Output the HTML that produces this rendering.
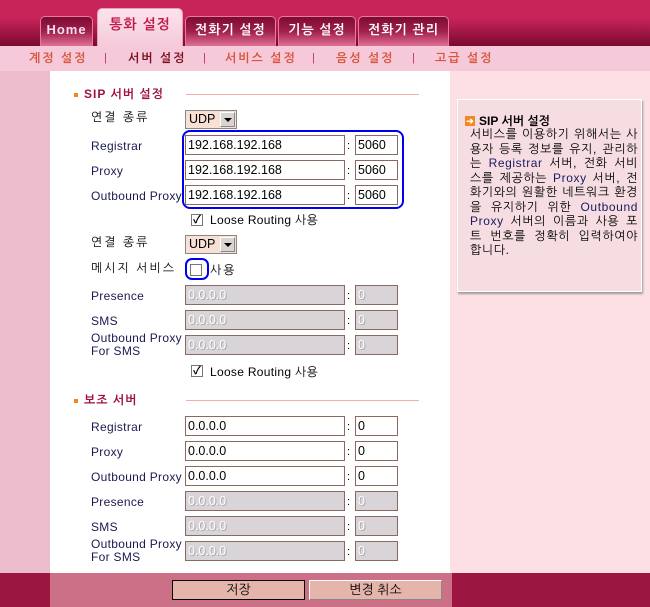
<!DOCTYPE html>
<html><head><meta charset="utf-8"><style>
*{margin:0;padding:0;box-sizing:border-box}
body{width:650px;height:607px;position:relative;overflow:hidden;font-family:"Liberation Sans","NanumGothic","Noto Sans CJK KR",sans-serif;font-size:12px;color:#000;background:#fff}
.a{position:absolute}
#top{left:0;top:0;width:650px;height:46px;background:linear-gradient(#c8245a 0,#c8245a 18px,#7a0a30 46px)}
.tab{position:absolute;top:16px;height:30px;border:1px solid #e87aa0;border-bottom:none;border-radius:5px 5px 0 0;background:linear-gradient(#7c0a32,#a0204c 50%,#e07096);color:#fff;font-weight:bold;font-size:13px;text-align:center;line-height:26px;letter-spacing:1px}
#sub{left:0;top:46px;width:650px;height:25px;background:#f5c9d9}
.sn{position:absolute;top:51px;font-size:12px;font-weight:bold;color:#d8563c;letter-spacing:2px}
.sep{position:absolute;top:52px;color:#c0305a;font-size:11px}
#left{left:0;top:71px;width:50px;height:502px;background:#ecbccc}
#right{left:450px;top:71px;width:200px;height:502px;background:#fde0e4}
.lab{position:absolute;left:91px;font-size:12px;color:#1a1a50;letter-spacing:0.3px}
.lab2{position:absolute;left:91px;font-size:12px;color:#000;letter-spacing:2px}
.ip{position:absolute;left:185px;width:160px;height:20px;border:1px solid #8a6a60;background:#fff;font-size:12.5px;padding:1px 2px;line-height:16px}
.pt{position:absolute;left:355px;width:43px;height:20px;border:1px solid #8a6a60;background:#fff;font-size:12.5px;padding:1px 2px;line-height:16px}
.dis{background:#d8d4d8;color:#fff;text-shadow:1px 1px 0 #aaa}
.col{position:absolute;left:347px;font-size:11px;color:#000}
.sel{position:absolute;left:185px;width:52px;height:19px;border:1px solid #888;background:#f8e0d4;font-size:12.5px;padding-left:3px;line-height:17px}
.sel i{position:absolute;right:1px;top:1px;width:15px;height:15px;background:#d8d4d0;border:1px solid #fff;border-right-color:#888;border-bottom-color:#888}
.sel i:after{content:"";position:absolute;left:3px;top:5px;border:4px solid transparent;border-top:4px solid #000}
.cb{position:absolute;width:12px;height:12px;border:1px solid #777;background:#fff;font-size:11px;line-height:10px;text-align:center;font-weight:bold}
.h{position:absolute;left:74px;font-size:12px;font-weight:bold;color:#a01040;letter-spacing:1px}
.h:before{content:"";display:inline-block;width:4px;height:4px;background:#f08a20;margin-right:6px;vertical-align:middle}
.line{position:absolute;left:186px;width:233px;height:1px;background:#f0b0a8}
</style></head><body>
<div id="top" class="a"></div>
<div class="tab" style="left:40px;width:53px;color:#f0e0f0">Home</div>
<div class="tab" style="left:97px;top:8px;width:86px;height:39px;background:linear-gradient(#fbe3ec,#f5c9d9);border-color:#e8a0b8;color:#c0184a;font-size:14px;line-height:30px">통화 설정</div>
<div class="tab" style="left:185px;width:91px;">전화기 설정</div>
<div class="tab" style="left:278px;width:78px;">기능 설정</div>
<div class="tab" style="left:358px;width:91px;">전화기 관리</div>
<div id="sub" class="a"></div>
<div class="sn" style="left:29px">계정 설정</div><div class="sep" style="left:104px">|</div>
<div class="sn" style="left:128px;color:#7a1020">서버 설정</div><div class="sep" style="left:203px">|</div>
<div class="sn" style="left:225px">서비스 설정</div><div class="sep" style="left:312px">|</div>
<div class="sn" style="left:336px">음성 설정</div><div class="sep" style="left:412px">|</div>
<div class="sn" style="left:435px">고급 설정</div>
<div id="left" class="a"></div>
<div id="right" class="a"></div>

<div class="h" style="top:87px">SIP 서버 설정</div><div class="line" style="top:94px"></div>
<div class="lab2" style="top:110px">연결 종류</div><div class="sel" style="top:110px">UDP<i></i></div>
<div class="a" style="left:182px;top:130px;width:222px;height:79px;border:2px solid #0000f0;border-radius:8px"></div>
<div class="lab" style="top:139px">Registrar</div><div class="ip" style="top:135px">192.168.192.168</div><div class="col" style="top:140px">:</div><div class="pt" style="top:135px">5060</div>
<div class="lab" style="top:164px">Proxy</div><div class="ip" style="top:160px">192.168.192.168</div><div class="col" style="top:165px">:</div><div class="pt" style="top:160px">5060</div>
<div class="lab" style="top:189px">Outbound Proxy</div><div class="ip" style="top:185px">192.168.192.168</div><div class="col" style="top:190px">:</div><div class="pt" style="top:185px">5060</div>
<div class="cb" style="left:191px;top:214px">✓</div><div class="lab" style="left:210px;top:213px;color:#000">Loose Routing 사용</div>
<div class="lab2" style="top:235px">연결 종류</div><div class="sel" style="top:235px">UDP<i></i></div>
<div class="lab2" style="top:261px">메시지 서비스</div>
<div class="a" style="left:185px;top:258px;width:24px;height:22px;border:2px solid #0000f0;border-radius:7px"></div>
<div class="cb" style="left:190px;top:264px"></div><div class="lab2" style="left:210px;top:263px">사용</div>
<div class="lab" style="top:289px">Presence</div><div class="ip dis" style="top:285px">0.0.0.0</div><div class="col" style="top:290px">:</div><div class="pt dis" style="top:285px">0</div>
<div class="lab" style="top:314px">SMS</div><div class="ip dis" style="top:310px">0.0.0.0</div><div class="col" style="top:315px">:</div><div class="pt dis" style="top:310px">0</div>
<div class="lab" style="top:332px;line-height:13px">Outbound Proxy<br>For SMS</div><div class="ip dis" style="top:335px">0.0.0.0</div><div class="col" style="top:340px">:</div><div class="pt dis" style="top:335px">0</div>
<div class="cb" style="left:191px;top:365px">✓</div><div class="lab" style="left:210px;top:365px;color:#000">Loose Routing 사용</div>

<div class="h" style="top:393px">보조 서버</div><div class="line" style="top:400px"></div>
<div class="lab" style="top:420px">Registrar</div><div class="ip" style="top:416px">0.0.0.0</div><div class="col" style="top:421px">:</div><div class="pt" style="top:416px">0</div>
<div class="lab" style="top:445px">Proxy</div><div class="ip" style="top:441px">0.0.0.0</div><div class="col" style="top:446px">:</div><div class="pt" style="top:441px">0</div>
<div class="lab" style="top:470px">Outbound Proxy</div><div class="ip" style="top:466px">0.0.0.0</div><div class="col" style="top:471px">:</div><div class="pt" style="top:466px">0</div>
<div class="lab" style="top:495px">Presence</div><div class="ip dis" style="top:491px">0.0.0.0</div><div class="col" style="top:496px">:</div><div class="pt dis" style="top:491px">0</div>
<div class="lab" style="top:520px">SMS</div><div class="ip dis" style="top:516px">0.0.0.0</div><div class="col" style="top:521px">:</div><div class="pt dis" style="top:516px">0</div>
<div class="lab" style="top:538px;line-height:13px">Outbound Proxy<br>For SMS</div><div class="ip dis" style="top:541px">0.0.0.0</div><div class="col" style="top:546px">:</div><div class="pt dis" style="top:541px">0</div>

<div class="a" style="left:457px;top:99px;width:185px;height:193px;background:#f5dde2;border:1px solid #fff;box-shadow:1px 2px 2px #999"></div>
<div class="a" style="left:465px;top:116px;width:10px;height:10px;background:#f08a20;color:#fff;font-size:9px;line-height:10px;text-align:center;font-weight:bold">➔</div>
<div class="a" style="left:479px;top:114px;font-size:12px;font-weight:bold">SIP 서버 설정</div>
<div class="a" style="left:470px;top:127px;width:168px;font-size:12px;line-height:14.5px;color:#000;letter-spacing:0.6px;text-align:justify">서비스를 이용하기 위해서는 사용자 등록 정보를 유지, 관리하는 <span style="color:#1a1a60">Registrar</span> 서버, 전화 서비스를 제공하는 <span style="color:#1a1a60">Proxy</span> 서버, 전화기와의 원활한 네트워크 환경을 유지하기 위한 <span style="color:#1a1a60">Outbound Proxy</span> 서버의 이름과 사용 포트 번호를 정확히 입력하여야 합니다.</div>

<div class="a" style="left:0;top:573px;width:50px;height:34px;background:#9c1642"></div>
<div class="a" style="left:50px;top:573px;width:402px;height:34px;background:#cc7088"></div>
<div class="a" style="left:452px;top:573px;width:198px;height:34px;background:#9c1642"></div>
<div class="a" style="left:172px;top:580px;width:133px;height:20px;background:#e5b5ac;border:1px solid #000;text-align:center;font-size:13px;line-height:18px">저장</div>
<div class="a" style="left:309px;top:580px;width:133px;height:20px;background:#e5b5ac;border:1px solid #fff;border-right-color:#888;border-bottom-color:#888;text-align:center;font-size:13px;line-height:18px">변경 취소</div>
</body></html>
